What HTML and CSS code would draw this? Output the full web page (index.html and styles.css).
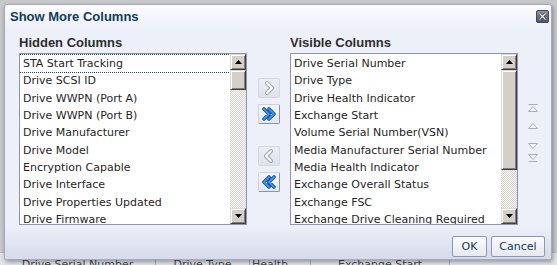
FILE: index.html
```html
<!DOCTYPE html>
<html lang="en">
<head>
    <meta charset="UTF-8">
    <title>Show More Columns</title>
    <link rel="stylesheet" href="styles.css">
</head>
<body>

    <!-- Table that sits behind the dialog -->
    <div class="backdrop">
        <div class="table-head">
            <div class="th th-serial">Drive Serial Number</div>
            <div class="th th-type">Drive Type</div>
            <div class="th th-health">Health</div>
            <div class="th th-start">Exchange Start</div>
            <div class="th th-more"></div>
        </div>
    </div>

    <!-- Show More Columns dialog -->
    <div class="dialog">
        <div class="dialog-head">
            <span class="dialog-title">Show More Columns</span>
            <span class="close-btn">
                <svg width="13" height="13" viewBox="0 0 13 13">
                    <defs>
                        <linearGradient id="closeBg" x1="0" y1="0" x2="0" y2="1">
                            <stop offset="0" stop-color="#8d96a9"/>
                            <stop offset="1" stop-color="#48526a"/>
                        </linearGradient>
                    </defs>
                    <rect x="0.5" y="0.5" width="12" height="12" rx="1.5" fill="url(#closeBg)" stroke="#3f485c"/>
                    <path d="M3.5 3.5 L9.5 9.5 M9.5 3.5 L3.5 9.5" stroke="#2b3242" stroke-width="2.6"/>
                    <path d="M3.5 3.5 L9.5 9.5 M9.5 3.5 L3.5 9.5" stroke="#ffffff" stroke-width="1.2"/>
                </svg>
            </span>
        </div>

        <div class="dialog-body">
            <div class="col-label">Hidden Columns</div>
            <div></div>
            <div class="col-label">Visible Columns</div>
            <div></div>

            <!-- Hidden columns list -->
            <div class="listbox">
                <div class="items">
                    <div class="item focused">STA Start Tracking</div>
                    <div class="item">Drive SCSI ID</div>
                    <div class="item">Drive WWPN (Port A)</div>
                    <div class="item">Drive WWPN (Port B)</div>
                    <div class="item">Drive Manufacturer</div>
                    <div class="item">Drive Model</div>
                    <div class="item">Encryption Capable</div>
                    <div class="item">Drive Interface</div>
                    <div class="item">Drive Properties Updated</div>
                    <div class="item">Drive Firmware</div>
                </div>
                <div class="scrollbar">
                    <div class="sb-btn"><svg width="7" height="4" viewBox="0 0 7 4"><polygon points="3.5,0 7,4 0,4" fill="#000"/></svg></div>
                    <div class="sb-thumb thumb-short"></div>
                    <div class="sb-track"></div>
                    <div class="sb-btn"><svg width="7" height="4" viewBox="0 0 7 4"><polygon points="0,0 7,0 3.5,4" fill="#000"/></svg></div>
                </div>
            </div>

            <!-- Shuttle buttons -->
            <div class="shuttle">
                <span class="shuttle-btn disabled">
                    <svg width="20" height="18" viewBox="0 0 20 18">
                        <path d="M8 4 L13 9 L8 14" fill="none" stroke="#9ea3ae" stroke-width="4" stroke-linejoin="round" stroke-linecap="round"/>
                        <path d="M8 4 L13 9 L8 14" fill="none" stroke="#ffffff" stroke-width="2" stroke-linejoin="round" stroke-linecap="round"/>
                    </svg>
                </span>
                <span class="shuttle-btn">
                    <svg width="20" height="18" viewBox="0 0 20 18">
                        <path d="M5 4 L10 9 L5 14 M10 4 L15 9 L10 14" fill="none" stroke="#ffffff" stroke-width="5.5" stroke-linejoin="round" stroke-linecap="round"/>
                        <path d="M5 4 L10 9 L5 14 M10 4 L15 9 L10 14" fill="none" stroke="#1c55bd" stroke-width="3.8" stroke-linejoin="round" stroke-linecap="round"/>
                        <path d="M5 4 L10 9 L5 14 M10 4 L15 9 L10 14" fill="none" stroke="#3ea2f2" stroke-width="1.6" stroke-linejoin="round" stroke-linecap="round"/>
                    </svg>
                </span>
                <span class="shuttle-btn disabled gap-top">
                    <svg width="20" height="18" viewBox="0 0 20 18">
                        <path d="M12 4 L7 9 L12 14" fill="none" stroke="#9ea3ae" stroke-width="4" stroke-linejoin="round" stroke-linecap="round"/>
                        <path d="M12 4 L7 9 L12 14" fill="none" stroke="#ffffff" stroke-width="2" stroke-linejoin="round" stroke-linecap="round"/>
                    </svg>
                </span>
                <span class="shuttle-btn">
                    <svg width="20" height="18" viewBox="0 0 20 18">
                        <path d="M15 4 L10 9 L15 14 M10 4 L5 9 L10 14" fill="none" stroke="#ffffff" stroke-width="5.5" stroke-linejoin="round" stroke-linecap="round"/>
                        <path d="M15 4 L10 9 L15 14 M10 4 L5 9 L10 14" fill="none" stroke="#1c55bd" stroke-width="3.8" stroke-linejoin="round" stroke-linecap="round"/>
                        <path d="M15 4 L10 9 L15 14 M10 4 L5 9 L10 14" fill="none" stroke="#3ea2f2" stroke-width="1.6" stroke-linejoin="round" stroke-linecap="round"/>
                    </svg>
                </span>
            </div>

            <!-- Visible columns list -->
            <div class="listbox">
                <div class="items">
                    <div class="item">Drive Serial Number</div>
                    <div class="item">Drive Type</div>
                    <div class="item">Drive Health Indicator</div>
                    <div class="item">Exchange Start</div>
                    <div class="item">Volume Serial Number(VSN)</div>
                    <div class="item">Media Manufacturer Serial Number</div>
                    <div class="item">Media Health Indicator</div>
                    <div class="item">Exchange Overall Status</div>
                    <div class="item">Exchange FSC</div>
                    <div class="item">Exchange Drive Cleaning Required</div>
                </div>
                <div class="scrollbar">
                    <div class="sb-btn"><svg width="7" height="4" viewBox="0 0 7 4"><polygon points="3.5,0 7,4 0,4" fill="#000"/></svg></div>
                    <div class="sb-thumb thumb-long"></div>
                    <div class="sb-track"></div>
                    <div class="sb-btn"><svg width="7" height="4" viewBox="0 0 7 4"><polygon points="0,0 7,0 3.5,4" fill="#000"/></svg></div>
                </div>
            </div>

            <!-- Reorder icons (disabled) -->
            <div class="reorder">
                <svg class="ro-top" width="10" height="8" viewBox="0 0 10 8">
                    <path d="M0.5 0.5 H9.5 M0.5 7.5 L5 2.5 L9.5 7.5 Z" fill="#fbfbfd" stroke="#a9aebb"/>
                </svg>
                <svg class="ro-up" width="10" height="6" viewBox="0 0 10 6">
                    <path d="M0.5 5.5 L5 0.5 L9.5 5.5 Z" fill="#fbfbfd" stroke="#a9aebb"/>
                </svg>
                <svg class="ro-down" width="10" height="6" viewBox="0 0 10 6">
                    <path d="M0.5 0.5 L5 5.5 L9.5 0.5 Z" fill="#fbfbfd" stroke="#a9aebb"/>
                </svg>
                <svg class="ro-bottom" width="10" height="8" viewBox="0 0 10 8">
                    <path d="M0.5 7.5 H9.5 M0.5 0.5 L5 5.5 L9.5 0.5 Z" fill="#fbfbfd" stroke="#a9aebb"/>
                </svg>
            </div>
        </div>

        <div class="dialog-foot">
            <button class="btn btn-ok">OK</button>
            <button class="btn btn-cancel">Cancel</button>
        </div>
    </div>

</body>
</html>
```

FILE: styles.css
```css
* {
    box-sizing: border-box;
}

html, body {
    margin: 0;
}

body {
    position: relative;
    width: 557px;
    height: 265px;
    overflow: hidden;
    background-color: #c7c8cc;
    font-family: "DejaVu Sans", sans-serif;
    font-size: 11px;
    color: #222;
}

/* Table behind the dialog */
.backdrop {
    height: 265px;
    display: flex;
    flex-direction: column;
    justify-content: flex-end;
}

.table-head {
    display: flex;
    height: 13px;
    background: #e3e4ea;
    border-top: 1px solid #b8bbc5;
}

.th {
    padding-top: 5px;
    line-height: 13px;
    text-align: center;
    color: #4a4a4a;
    border-right: 1px solid #a8acb7;
    white-space: nowrap;
}

.th-serial { width: 156px; }
.th-type { width: 94px; }
.th-health { width: 61px; text-align: left; padding-left: 2px; }
.th-start { width: 139px; }
.th-more { flex: 1; border-right: none; }

/* Dialog window */
.dialog {
    position: absolute;
    left: 4px;
    top: 4px;
    width: 548px;
    height: 256px;
    display: flex;
    flex-direction: column;
    background-color: #eef0f9;
    border: 1px solid #a4a9bb;
    border-radius: 3px;
    box-shadow: 1px 2px 4px rgba(0, 0, 0, 0.35);
}

.dialog-head {
    height: 24px;
    display: flex;
    align-items: center;
    justify-content: space-between;
    padding: 0 2px 0 5px;
    background: linear-gradient(#fbfbfe, #eef0f9);
    border-radius: 3px 3px 0 0;
}

.dialog-title {
    font-family: "Liberation Sans", sans-serif;
    font-weight: bold;
    font-size: 13px;
    line-height: 24px;
    color: #0f3d5e;
}

.close-btn {
    display: flex;
    width: 13px;
    height: 13px;
    margin-top: -1px;
}

.dialog-body {
    display: grid;
    grid-template-columns: 228px 43px 228px 1fr;
    grid-template-rows: 16px 172px;
    row-gap: 2px;
    padding: 6px 0 0 14px;
}

.col-label {
    font-family: "Liberation Sans", sans-serif;
    font-weight: bold;
    font-size: 13px;
    line-height: 16px;
    color: #2e2e2e;
}

/* List boxes */
.listbox {
    display: flex;
    background: #fff;
    border: 1px solid #8e98aa;
}

.items {
    flex: 1;
    overflow: hidden;
    padding-top: 1px;
}

.item {
    height: 17.33px;
    line-height: 17.33px;
    padding-left: 3px;
    white-space: nowrap;
    color: #262626;
}

.item.focused {
    outline: 1px dotted #1f3f86;
    outline-offset: 0;
}

/* Classic scrollbar */
.scrollbar {
    width: 16px;
    display: flex;
    flex-direction: column;
}

.sb-btn, .sb-thumb {
    background-color: #d4d0c8;
    border: 1px solid;
    border-color: #dedad3 #404040 #404040 #dedad3;
    box-shadow: inset 1px 1px #ffffff, inset -1px -1px #808080;
}

.sb-btn {
    height: 16px;
    display: flex;
    align-items: center;
    justify-content: center;
}

.thumb-short { height: 20px; }
.thumb-long { height: 100px; }

.sb-track {
    flex: 1;
    background-image: repeating-conic-gradient(#d4d0c8 0 25%, #ffffff 0 50%);
    background-size: 2px 2px;
}

/* Shuttle buttons between the lists */
.shuttle {
    display: flex;
    flex-direction: column;
    align-items: center;
    gap: 6px;
    padding-top: 25px;
}

.shuttle-btn {
    display: flex;
    align-items: center;
    justify-content: center;
    width: 22px;
    height: 20px;
    border: 1px solid;
    border-color: #cdd2de #8c95aa #8c95aa #cdd2de;
    border-radius: 2px;
    background: linear-gradient(#f7f8fc, #e1e5ef);
}

.shuttle-btn.disabled {
    border-color: #d3d7e2;
    background: linear-gradient(#eceef5, #dfe2eb);
}

.shuttle-btn.gap-top {
    margin-top: 16px;
}

/* Reorder icons */
.reorder {
    display: flex;
    flex-direction: column;
    align-items: center;
    padding: 51px 4px 0 0;
}

.reorder svg {
    display: block;
}

.ro-up { margin-top: 11px; }
.ro-down { margin-top: 14px; }
.ro-bottom { margin-top: 5px; }

/* Footer */
.dialog-foot {
    flex: 1;
    display: flex;
    justify-content: flex-end;
    align-items: flex-start;
    gap: 4px;
    padding: 11px 6px 0 0;
    background: linear-gradient(#eef0f9, #d6daea);
    border-radius: 0 0 3px 3px;
}

.btn {
    height: 21px;
    padding: 0;
    font-family: "DejaVu Sans", sans-serif;
    font-size: 11px;
    color: #123a58;
    background: linear-gradient(#fbfbfd, #e7e9f1);
    border: 1px solid #8d98b0;
    border-radius: 2px;
}

.btn-ok { width: 35px; }
.btn-cancel { width: 54px; }
```
